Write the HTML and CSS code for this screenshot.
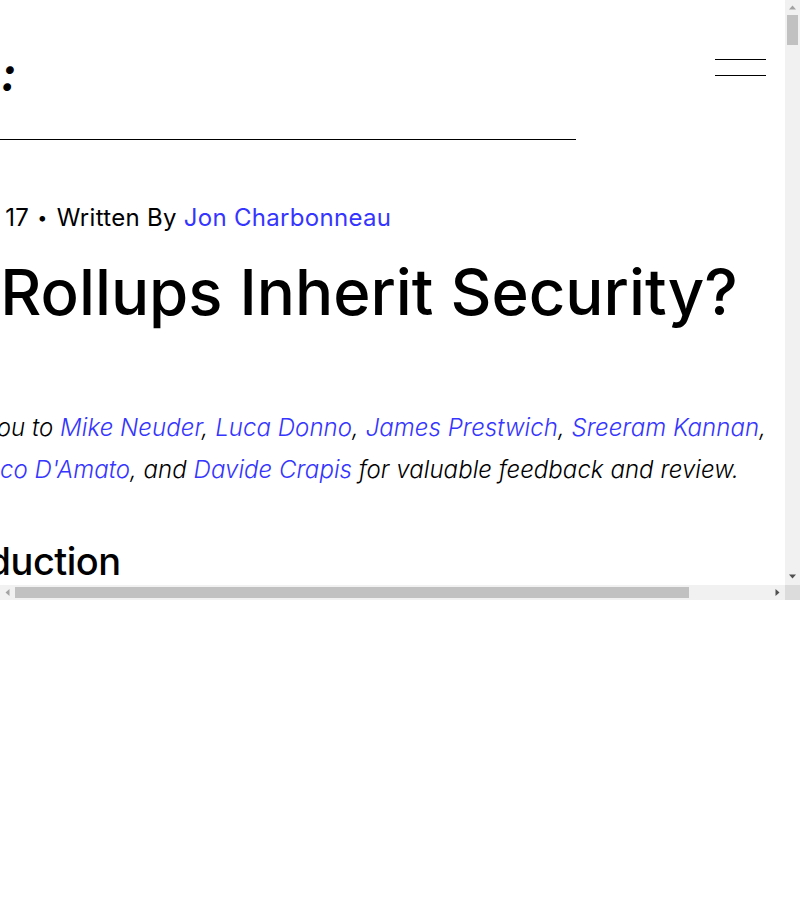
FILE: index.html
```html
<!DOCTYPE html>
<html lang="en">
<head>
<meta charset="utf-8">
<title>How Do Rollups Inherit Security?</title>
<link rel="stylesheet" href="styles.css">
</head>
<body>
<div class="window">
  <div class="content">
    <div class="page">
      <header class="site-header">
        <a class="logo" href="#">:</a>
        <button class="menu-toggle" aria-label="Menu">
          <span class="menu-line"></span>
          <span class="menu-line"></span>
        </button>
      </header>
      <div class="rule"></div>
      <article class="post">
        <div class="post-meta">
          <span class="meta-date">Jan 17</span>
          <span class="meta-dot">•</span>
          <span class="meta-author">Written By <a class="link" href="#">Jon Charbonneau</a></span>
        </div>
        <h1 class="post-title">How Do Rollups Inherit Security?</h1>
        <p class="post-thanks">Thank you to <a class="link" href="#">Mike Neuder</a>, <a class="link" href="#">Luca Donno</a>, <a class="link" href="#">James Prestwich</a>, <a class="link" href="#">Sreeram Kannan</a>, <a class="link" href="#">Francesco D'Amato</a>, and <a class="link" href="#">Davide Crapis</a> for valuable feedback and review.</p>
        <h2 class="post-heading">Introduction</h2>
      </article>
    </div>
  </div>

  <div class="vbar">
    <div class="sb-btn">
      <svg width="15" height="15" viewBox="0 0 15 15"><path d="M4 9.5H11L7.5 5.5Z" fill="#a3a3a3"/></svg>
    </div>
    <div class="vtrack"><div class="vthumb"></div></div>
    <div class="sb-btn">
      <svg width="15" height="15" viewBox="0 0 15 15"><path d="M4 4.5H11L7.5 8.5Z" fill="#505050"/></svg>
    </div>
  </div>

  <div class="hbar">
    <div class="sb-btn">
      <svg width="15" height="15" viewBox="0 0 15 15"><path d="M9.5 4V11L5.5 7.5Z" fill="#a3a3a3"/></svg>
    </div>
    <div class="htrack"><div class="hthumb"></div></div>
    <div class="sb-btn">
      <svg width="15" height="15" viewBox="0 0 15 15"><path d="M5.5 4V11L9.5 7.5Z" fill="#505050"/></svg>
    </div>
  </div>

  <div class="corner"></div>
</div>
</body>
</html>
```
FILE: styles.css
```css
html, body {
  margin: 0;
  padding: 0;
  background: #fff;
}

body {
  font-family: "Inter", "Noto Sans", sans-serif;
  color: #000;
}

.window {
  width: 800px;
  height: 600px;
  display: grid;
  grid-template-columns: 785px 15px;
  grid-template-rows: 585px 15px;
}

.content {
  overflow: hidden;
}

/* scrollbars */
.vbar,
.hbar {
  display: flex;
  background: #f1f1f1;
}

.vbar {
  flex-direction: column;
}

.sb-btn {
  flex: none;
  width: 15px;
  height: 15px;
}

.sb-btn svg {
  display: block;
}

.vtrack {
  flex: 1;
  padding: 0 2px;
}

.vthumb {
  height: 30px;
  background: #c1c1c1;
}

.htrack {
  flex: 1;
  padding: 2px 0;
}

.hthumb {
  width: 674px;
  height: 11px;
  background: #c1c1c1;
}

.corner {
  background: #dcdcdc;
}

/* page */
.page {
  width: 785px;
}

.site-header {
  box-sizing: border-box;
  height: 139px;
  padding: 56px 19px 0 0;
  display: flex;
  justify-content: space-between;
  align-items: flex-start;
}

.logo {
  font-size: 46px;
  line-height: 36px;
  font-weight: 700;
  font-style: italic;
  color: #000;
  text-decoration: none;
  margin-left: 1px;
}

.menu-toggle {
  margin-top: 3px;
  padding: 0;
  border: 0;
  background: none;
  width: 51px;
  display: flex;
  flex-direction: column;
  gap: 15px;
}

.menu-line {
  display: block;
  width: 51px;
  height: 1px;
  background: #000;
}

.rule {
  width: 576px;
  height: 1px;
  background: #000;
}

.post {
  padding-top: 60px;
}

.link {
  color: #3535ff;
  text-decoration: none;
}

.post-meta {
  display: flex;
  align-items: center;
  gap: 9px;
  margin-left: -44px;
  font-size: 24px;
  line-height: 36px;
  letter-spacing: 0.3px;
}

.meta-dot {
  font-size: 18px;
  margin-left: -1px;
}

.post-title {
  margin: 19px 0 0 -255px;
  font-size: 63.5px;
  line-height: 74px;
  font-weight: 500;
  white-space: nowrap;
}

.post-thanks {
  margin: 78px 0 0 -90px;
  text-indent: -4px;
  width: 868px;
  font-size: 24px;
  line-height: 42px;
  font-style: italic;
  font-weight: 300;
  letter-spacing: 0.05px;
}

.post-heading {
  margin: 45px 0 0 -93px;
  font-size: 38px;
  line-height: 50px;
  font-weight: 500;
  letter-spacing: -0.5px;
}
```
